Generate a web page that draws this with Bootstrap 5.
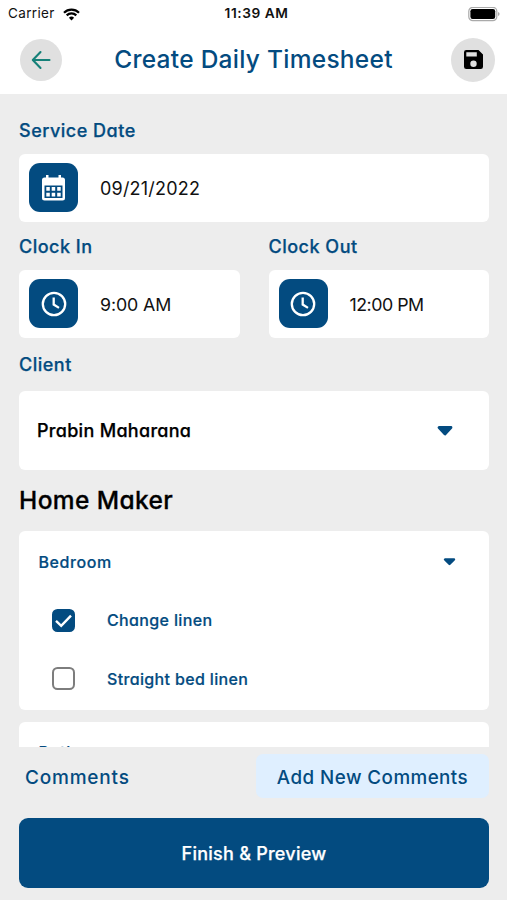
<!DOCTYPE html>
<html lang="en">
<head>
<meta charset="utf-8">
<meta name="viewport" content="width=device-width, initial-scale=1">
<title>Create Daily Timesheet</title>
<link href="https://cdn.jsdelivr.net/npm/bootstrap@5.3.0/dist/css/bootstrap.min.css" rel="stylesheet">
<style>
:root{--navy:#034b80}
body{font-family:Inter,"Liberation Sans",sans-serif;background:#ededed;color:#111;height:900px;line-height:1}
.geo{font-feature-settings:"cv11" 1}
.navy{color:var(--navy)}
.status{height:28px;padding:0 7px 0 8px;font-size:13.5px}
.status>div{flex:1 1 0}
.carrier{letter-spacing:.35px}
.time{letter-spacing:.55px;font-size:13.7px;padding-left:5px}
.titlebar{height:66px;padding:0 12px 3px 20px}
.titlebar h1{font-size:24.5px;font-weight:500;letter-spacing:.27px;padding:1px 6px 0 0}
.round{width:42px;height:42px;background:#e0e0e0;border:0}
.round.save{width:44px;height:44px}
.scroller{height:653px;padding:0 18px 0 19px}
.field-label{font-size:18px;font-weight:500;height:24px;letter-spacing:.5px;-webkit-text-stroke:.25px;margin:12.5px 0 11px}
.field-label.first{margin-top:24.5px}
.field-label.client-label{margin:15px 0 14px}
.panel{background:#fff;border-radius:6px}
.field{height:68.5px;padding-left:10px;gap:22px;font-size:18px}
.field .value{padding-top:2px;letter-spacing:.2px}
.field .clock{font-size:17.8px;letter-spacing:-.1px}
.field .clock-out{letter-spacing:-.5px}
.tile{width:49px;height:49px;border-radius:11px;background:var(--navy)}
.times{column-gap:29px}
.client{height:79px;padding:0 36px 0 18px;font-size:18px;font-weight:500;color:#000;letter-spacing:.3px;-webkit-text-stroke:.25px}
.section-title{font-size:24.5px;font-weight:500;color:#000;height:61px;letter-spacing:.4px;padding-top:1px;-webkit-text-stroke:.3px}
.group{height:178.5px;font-size:16px;font-weight:500;letter-spacing:.35px;-webkit-text-stroke:.2px}
.group+.group{margin-top:12px}
.group-head{height:61px;padding:0 33px 0 19.5px}
.group-head span{letter-spacing:.6px}
.task{height:58.5px;padding:0 0 2px 33px;gap:32px}
.box{width:23px;height:23px;margin:0!important;border:2px solid #7d7d7d;border-radius:5.5px!important;background-color:#fff}
.box:checked{background-color:var(--navy);border-color:var(--navy);background-size:23px;background-image:url("data:image/svg+xml,%3csvg xmlns='http://www.w3.org/2000/svg' viewBox='0 0 23 23'%3e%3cpath fill='none' stroke='%23fff' stroke-width='2.4' d='M4 11.800l5.200 5L19 6.600'/%3e%3c/svg%3e")}
.comments{height:51px;padding:7px 18px 0 25px;font-size:19px;font-weight:500;letter-spacing:.8px}
.comments>span{padding-top:2px}
.add{height:44px;width:233px;padding:4px 0 0;border:0;border-radius:7px;font-size:18.8px;font-weight:500;letter-spacing:.45px}
.add,.add:hover{background:#dfefff}
.finish{height:70px;margin:20px 18px 12px 19px;border-radius:9px;background:var(--navy);color:#fff;font-size:18px;font-weight:500;letter-spacing:.25px;-webkit-text-stroke:.25px}
.finish,.round{padding:0}
</style>
<script src="https://cdn.jsdelivr.net/npm/bootstrap@5.3.0/dist/js/bootstrap.bundle.min.js"></script>
</head>
<body class="overflow-hidden d-flex flex-column">
<header class="bg-white flex-shrink-0">
  <div class="status d-flex align-items-center">
    <div class="d-flex align-items-center gap-2"><span class="carrier">Carrier</span>
      <svg width="17" height="13" viewBox="0 0 17 13" fill="none" stroke="#000" stroke-width="2.2"><path d="M1 4.700a10.600 10.600 0 0 1 15 0M3.700 7.400a6.800 6.800 0 0 1 9.600 0"/><path d="M8.500 12.400 5.900 9.700a3.700 3.700 0 0 1 5.200 0z" fill="#000" stroke="none"/></svg>
    </div>
    <div class="text-center fw-semibold text-nowrap"><span class="time">11:39 AM</span></div>
    <div class="d-flex justify-content-end">
      <svg width="32" height="15" viewBox="0 0 32 15"><rect x=".8" y=".3" width="28" height="13.4" rx="4" fill="#fff" stroke="#aaa" stroke-width="1.2"/><rect x="2.4" y="2" width="24.800" height="10" rx="2.200"/><path d="M30.200 5a2.200 2.200 0 0 1 0 4z" fill="#999"/></svg>
    </div>
  </div>
  <div class="titlebar d-flex align-items-center justify-content-between">
    <button class="btn round rounded-circle d-flex align-items-center justify-content-center" aria-label="Back">
      <svg width="20" height="20" viewBox="0 0 20 20" fill="none" stroke="#158078" stroke-width="2.1" stroke-linecap="round" stroke-linejoin="round"><path d="M18.500 10H2M9.500 2 1.800 10l7.700 8"/></svg>
    </button>
    <h1 class="navy m-0">Create Daily Timesheet</h1>
    <button class="btn round save rounded-circle d-flex align-items-center justify-content-center" aria-label="Save">
      <svg width="19" height="19" viewBox="0 0 19 19"><path fill-rule="evenodd" d="M2.300 0h12.200L19 4.500v12.200a2.300 2.300 0 0 1-2.300 2.300H2.300A2.300 2.300 0 0 1 0 16.700V2.300A2.300 2.300 0 0 1 2.300 0zM2.300 2.300v4.200h10.500V2.300zM9.500 10.500a3.200 3.200 0 1 0 0 6.400 3.200 3.200 0 0 0 0-6.400z"/></svg>
    </button>
  </div>
</header>

<main class="scroller geo overflow-hidden flex-shrink-0">
  <div class="field-label first navy d-flex align-items-center">Service Date</div>
  <div class="panel field d-flex align-items-center">
    <span class="tile d-flex align-items-center justify-content-center">
      <svg width="23" height="26" viewBox="0 0 23 26"><path fill="#fff" fill-rule="evenodd" d="M4 0h2.500v2.500h10V0H19v2.500h1.500A2.500 2.500 0 0 1 23 5v18a2.500 2.500 0 0 1-2.500 2.500h-18A2.500 2.500 0 0 1 0 23V5a2.500 2.500 0 0 1 2.500-2.500H4zM2.500 10.500V23h18V10.500z"/><path fill="#fff" d="M4.300 12h3.500v3.700H4.300zM9.700 12h3.500v3.700H9.700zM15.200 12h3.500v3.700h-3.500zM4.300 17.700h3.500v3.700H4.300zM9.700 17.700h3.500v3.700H9.700zM15.200 17.700h3.500v3.700h-3.500z"/></svg>
    </span><span class="value">09/21/2022</span>
  </div>
  <div class="row g-0 times">
    <div class="col">
      <div class="field-label navy d-flex align-items-center">Clock In</div>
      <div class="panel field d-flex align-items-center">
        <span class="tile d-flex align-items-center justify-content-center"><svg width="26" height="26" viewBox="0 0 26 26" fill="none" stroke="#fff" stroke-width="2.300"><circle cx="13" cy="13" r="11.200"/><path d="M12.700 6.500v7l5.300 3.400"/></svg></span>
        <span class="value clock">9:00 AM</span>
      </div>
    </div>
    <div class="col">
      <div class="field-label navy d-flex align-items-center">Clock Out</div>
      <div class="panel field d-flex align-items-center">
        <span class="tile d-flex align-items-center justify-content-center"><svg width="26" height="26" viewBox="0 0 26 26" fill="none" stroke="#fff" stroke-width="2.300"><circle cx="13" cy="13" r="11.200"/><path d="M12.700 6.500v7l5.300 3.400"/></svg></span>
        <span class="value clock clock-out">12:00 PM</span>
      </div>
    </div>
  </div>
  <div class="field-label client-label navy d-flex align-items-center">Client</div>
  <div class="panel client d-flex align-items-center justify-content-between"><span>Prabin Maharana</span>
    <svg width="16" height="11" viewBox="0 0 16 11"><path d="M2 2.500h12L8 9z" fill="#034b80" stroke="#034b80" stroke-width="2.800" stroke-linejoin="round"/></svg></div>
  <h2 class="section-title m-0 d-flex align-items-center">Home Maker</h2>
  <div class="panel group navy">
    <div class="group-head d-flex align-items-center justify-content-between"><span>Bedroom</span>
      <svg width="13" height="9" viewBox="0 0 13 9"><path d="M2 2.500h9L6.500 7z" fill="#034b80" stroke="#034b80" stroke-width="2.400" stroke-linejoin="round"/></svg></div>
    <label class="task form-check m-0 d-flex align-items-center"><input type="checkbox" class="form-check-input box" checked><span>Change linen</span></label>
    <label class="task form-check m-0 d-flex align-items-center"><input type="checkbox" class="form-check-input box"><span>Straight bed linen</span></label>
  </div>
  <div class="panel group navy">
    <div class="group-head d-flex align-items-center"><span>Bathroom</span></div>
  </div>
</main>

<footer class="geo flex-shrink-0">
  <div class="comments navy d-flex align-items-center justify-content-between"><span>Comments</span>
    <button class="btn add navy flex-shrink-0">Add New Comments</button></div>
  <div class="d-flex"><button class="btn finish flex-fill">Finish &amp; Preview</button></div>
</footer>
</body>
</html>
